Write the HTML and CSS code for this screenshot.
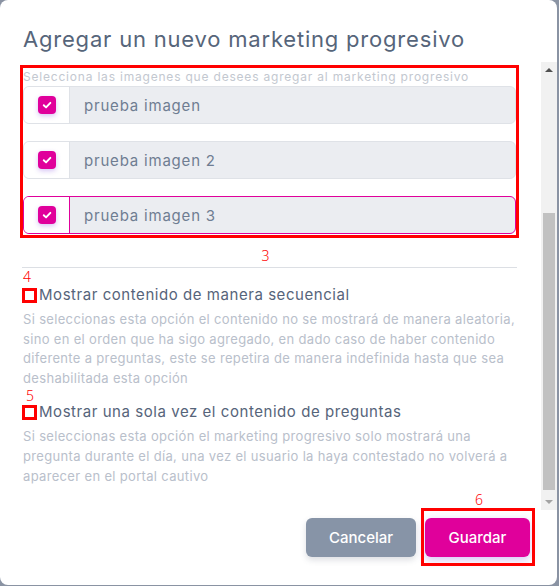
FILE: index.html
```html
<!DOCTYPE html>
<html>
<head>
    <title>Agregar un nuevo marketing progresivo</title>
    <link rel="stylesheet" href="styles.css">
</head>
<body>
    <div class="modal">
        <h2 class="modal-title">Agregar un nuevo marketing progresivo</h2>
        <div class="modal-body">
            <div class="scroll-content">
                <div class="image-picker">
                    <p class="picker-hint">Selecciona las imagenes que desees agregar al marketing progresivo</p>
                    <div class="image-list">
                        <label class="image-row">
                            <span class="row-check"><span class="checkbox"><svg viewBox="0 0 10 10"><path d="M2.3 5.2 L4.2 7 L7.8 3.2" /></svg></span></span>
                            <span class="row-name">prueba imagen</span>
                        </label>
                        <label class="image-row">
                            <span class="row-check"><span class="checkbox"><svg viewBox="0 0 10 10"><path d="M2.3 5.2 L4.2 7 L7.8 3.2" /></svg></span></span>
                            <span class="row-name">prueba imagen 2</span>
                        </label>
                        <label class="image-row active">
                            <span class="row-check"><span class="checkbox"><svg viewBox="0 0 10 10"><path d="M2.3 5.2 L4.2 7 L7.8 3.2" /></svg></span></span>
                            <span class="row-name">prueba imagen 3</span>
                        </label>
                    </div>
                </div>
                <div class="mark-num center">3</div>
                <div class="options">
                    <hr class="divider">
                    <div class="mark-num first">4</div>
                    <div class="option">
                        <div class="option-head"><span class="option-box"></span>Mostrar contenido de manera secuencial</div>
                        <p class="option-desc">Si seleccionas esta opción el contenido no se mostrará de manera aleatoria, sino en el orden que ha sigo agregado, en dado caso de haber contenido diferente a preguntas, este se repetira de manera indefinida hasta que sea deshabilitada esta opción</p>
                    </div>
                    <div class="mark-num second">5</div>
                    <div class="option">
                        <div class="option-head"><span class="option-box"></span>Mostrar una sola vez el contenido de preguntas</div>
                        <p class="option-desc">Si seleccionas esta opción el marketing progresivo solo mostrará una pregunta durante el día, una vez el usuario la haya contestado no volverá a aparecer en el portal cautivo</p>
                    </div>
                </div>
            </div>
            <div class="scrollbar">
                <span class="sb-btn up"></span>
                <div class="sb-track"><div class="sb-thumb"></div></div>
                <span class="sb-btn down"></span>
            </div>
        </div>
        <div class="modal-footer">
            <button type="button" class="btn btn-cancel">Cancelar</button>
            <span class="mark-wrap">
                <span class="mark-label">6</span>
                <button type="button" class="btn btn-save">Guardar</button>
            </span>
        </div>
    </div>
</body>
</html>
```

FILE: styles.css
```css
body, html {
    margin: 0;
    padding: 0;
    height: 100%;
    background-color: #8a93a3;
    font-family: Inter, "Noto Sans", sans-serif;
}
.modal {
    width: 557px;
    height: 585px;
    background-color: #fff;
    border-radius: 8px;
    display: flex;
    flex-direction: column;
    overflow: hidden;
}
.modal-title {
    margin: 0;
    padding: 26px 23px 10px;
    font-size: 22px;
    line-height: 26px;
    font-weight: 400;
    letter-spacing: 0.8px;
    color: #56657a;
    white-space: nowrap;
}
.modal-body {
    height: 448px;
    display: flex;
}
.scroll-content {
    flex: 1;
    overflow: hidden;
    padding: 3px 22px 0 20px;
}
.image-picker {
    border: 3px solid #f00;
    padding-bottom: 1px;
}
.picker-hint {
    margin: 0;
    font-size: 12px;
    line-height: 18px;
    letter-spacing: 0.8px;
    color: #c3c8d0;
    white-space: nowrap;
    overflow: hidden;
}
.image-list {
    display: flex;
    flex-direction: column;
    gap: 17px;
}
.image-row {
    display: flex;
    height: 38px;
    box-sizing: border-box;
    border: 1px solid #dfe2e7;
    border-radius: 6px;
    overflow: hidden;
    background-color: #ebedf1;
}
.image-row.active {
    border-color: #e0009b;
}
.row-check {
    width: 45px;
    background-color: #fff;
    border-right: 1px solid #dfe2e7;
    display: flex;
    align-items: center;
    justify-content: center;
}
.image-row.active .row-check {
    border-right-color: #e0009b;
}
.checkbox {
    width: 18px;
    height: 18px;
    border-radius: 4px;
    background-color: #e0009b;
    box-shadow: 0 2px 5px rgba(120, 60, 220, 0.3);
    display: flex;
    align-items: center;
    justify-content: center;
}
.checkbox svg {
    width: 12px;
    height: 12px;
    fill: none;
    stroke: #fff;
    stroke-width: 1.6;
    stroke-linecap: round;
    stroke-linejoin: round;
}
.row-name {
    padding-left: 14px;
    display: flex;
    align-items: center;
    font-size: 15px;
    letter-spacing: 0.8px;
    color: #6f7d92;
}
.mark-num {
    font-family: "Noto Sans", sans-serif;
    font-size: 14px;
    font-weight: 300;
    color: #f00;
}
.mark-num.center {
    text-align: center;
    padding: 7px 8px 0 0;
    line-height: 22px;
}
.options {
    padding: 0 2px;
}
.divider {
    margin: 0;
    border: 0;
    border-top: 1px solid #dcdfe4;
}
.mark-num.first {
    padding-left: 1px;
    line-height: 18px;
}
.mark-num.second {
    padding-left: 4px;
    line-height: 15px;
}
.option-head {
    display: flex;
    align-items: center;
    font-size: 15px;
    line-height: 18px;
    letter-spacing: 0.55px;
    color: #56647a;
}
.option-box {
    width: 9px;
    height: 9px;
    border: 3px solid #f00;
    margin-right: 2px;
}
.option-desc {
    margin: 6px 0 0 1px;
    font-size: 13px;
    line-height: 19.6px;
    letter-spacing: 0.33px;
    color: #b9c0cb;
}
.scrollbar {
    width: 16px;
    background-color: #f1f1f1;
    display: flex;
    flex-direction: column;
}
.sb-btn {
    height: 16px;
    display: flex;
    align-items: center;
    justify-content: center;
}
.sb-btn::before {
    content: "";
    border-left: 4px solid transparent;
    border-right: 4px solid transparent;
}
.sb-btn.up::before {
    border-bottom: 4px solid #505050;
}
.sb-btn.down::before {
    border-top: 4px solid #a3a3a3;
}
.sb-track {
    flex: 1;
    padding: 0 2px;
}
.sb-thumb {
    margin-top: 135px;
    height: 277px;
    background-color: #c1c1c1;
}
.modal-footer {
    flex: 1;
    display: flex;
    justify-content: flex-end;
    align-items: flex-start;
    gap: 9px;
    padding: 8px 27px 0 0;
}
.btn {
    height: 39px;
    border: 0;
    border-radius: 6px;
    font-family: inherit;
    font-size: 15px;
    font-weight: 500;
    color: #fff;
    cursor: pointer;
}
.btn-cancel {
    width: 110px;
    background-color: #8794a7;
    box-shadow: 0 3px 6px rgba(80, 90, 110, 0.2);
}
.btn-save {
    width: 105px;
    background-color: #e0009b;
    box-shadow: 0 3px 8px rgba(120, 60, 220, 0.3);
}
.mark-wrap {
    position: relative;
    display: flex;
}
.mark-wrap::after {
    content: "";
    position: absolute;
    top: -10px;
    right: -5px;
    bottom: -9px;
    left: -4px;
    border: 3px solid #f00;
}
.mark-label {
    position: absolute;
    top: -28px;
    left: 50px;
    font-family: "Noto Sans", sans-serif;
    font-size: 14px;
    font-weight: 300;
    color: #f00;
}
```
